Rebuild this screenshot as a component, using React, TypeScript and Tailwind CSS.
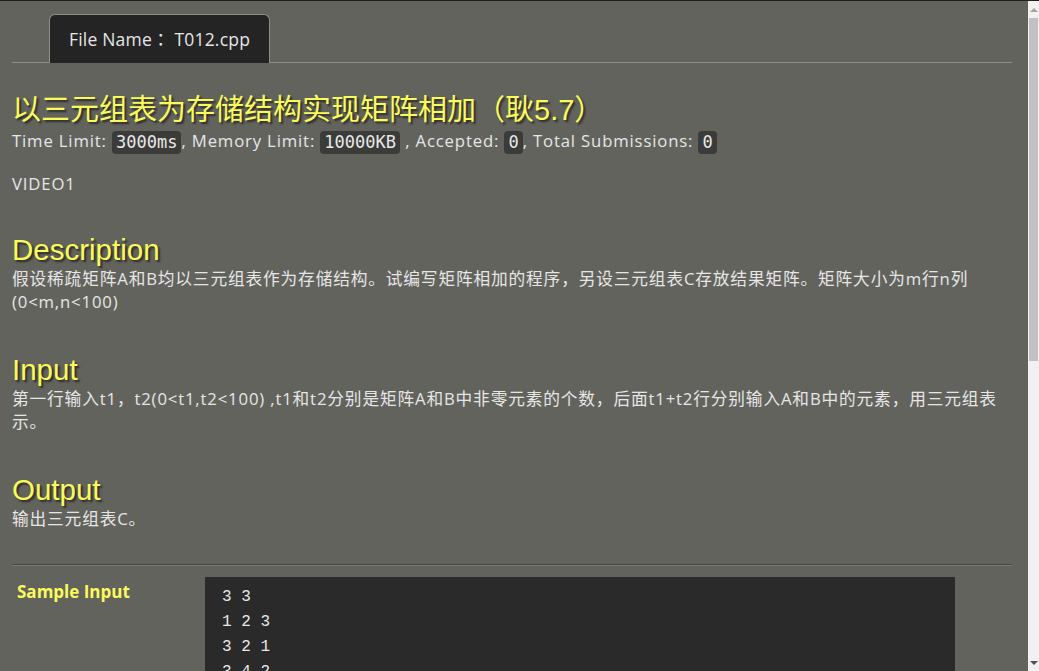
import React from "react";

const body = "font-['Open_Sans','Noto_Sans_CJK_SC',sans-serif]";

function Badge({ children }: { children: React.ReactNode }) {
  return (
    <code className="inline-block rounded-[4px] bg-[#3b3b39] px-[4px] leading-[23px] tracking-normal text-[17px] text-[#e8e8e8] font-['DejaVu_Sans_Mono',monospace] align-middle">
      {children}
    </code>
  );
}

function Heading({ children }: { children: React.ReactNode }) {
  return (
    <h2 className="text-[29.5px] leading-[34px] tracking-normal text-[#fafa5a] [text-shadow:2px_2px_2px_#2a2a28] font-['Liberation_Sans','Noto_Sans_CJK_SC',sans-serif]">
      {children}
    </h2>
  );
}

export default function App() {
  return (
    <div className="flex h-[671px] w-full overflow-hidden border-t border-[#1e1e1e] bg-[#63635e]">
      <div className={`flex-1 overflow-hidden pl-[12px] ${body} text-[16.7px] tracking-[0.85px] text-[#e6e6e6]`}>
        <div className="mr-[16px] flex border-b border-[#8c8c86] pl-[37px] pt-[13px]">
          <div className="-mb-px flex h-[49px] items-center rounded-t-[6px] border border-b-0 border-[#8f8f89] bg-[#242424] px-[19px] text-[17.5px] tracking-[0.2px] text-[#e6e6e6]">
            <span>File Name</span>
            <span className="font-['Noto_Sans_CJK_TC',sans-serif]">：</span>
            <span>&nbsp;T012.cpp</span>
          </div>
        </div>

        <div className="pr-[14px]">
          <h1 className="mt-[30px] text-[29px] leading-[34px] tracking-normal text-[#fafa5a] [text-shadow:2px_2px_2px_#2a2a28] font-['Liberation_Sans','Noto_Sans_CJK_SC',sans-serif]">
            以三元组表为存储结构实现矩阵相加（耿5.7）
          </h1>
          <div className="leading-[27px]">
            Time Limit: <Badge>3000ms</Badge>, Memory Limit: <Badge>10000KB</Badge> , Accepted: <Badge>0</Badge>, Total Submissions: <Badge>0</Badge>
          </div>
          <div className="mt-[18px] leading-[23px]">VIDEO1</div>

          <div className="mt-[38px]">
            <Heading>Description</Heading>
            <p className="leading-[23px]">
              假设稀疏矩阵A和B均以三元组表作为存储结构。试编写矩阵相加的程序，另设三元组表C存放结果矩阵。矩阵大小为m行n列(0&lt;m,n&lt;100)
            </p>
          </div>

          <div className="mt-[40px]">
            <Heading>Input</Heading>
            <p className="leading-[23px]">
              第一行输入t1，t2(0&lt;t1,t2&lt;100) ,t1和t2分别是矩阵A和B中非零元素的个数，后面t1+t2行分别输入A和B中的元素，用三元组表示。
            </p>
          </div>

          <div className="mt-[40px]">
            <Heading>Output</Heading>
            <p className="leading-[23px]">输出三元组表C。</p>
          </div>

          <div className="mr-[2px] mt-[34px] border-t border-[#474744]">
            <div className="border-t border-[#7c7c77]" />
          </div>

          <div className="mt-[11px] flex">
            <div className="w-[193px] pl-[5px] pt-[2px] text-[17px] font-bold tracking-normal text-[#fafa5a] font-['Open_Sans',sans-serif]">
              Sample Input
            </div>
            <pre className="h-[120px] w-[750px] bg-[#2a2a2a] px-[17px] pt-[8px] text-[16px] leading-[25px] tracking-normal text-[#e8e8e8] font-['Liberation_Mono',monospace]">
{`3 3
1 2 3
3 2 1
3 4 2`}
            </pre>
          </div>
        </div>
      </div>

      <div className="flex w-[11px] shrink-0 flex-col bg-[#f1f1f1]">
        <div className="flex h-[17px] items-center justify-center">
          <div className="h-0 w-0 border-x-[4px] border-b-[4px] border-x-transparent border-b-[#a3a3a3]" />
        </div>
        <div className="mx-[1px] h-[343px] bg-[#c1c1c1]" />
        <div className="flex-1" />
        <div className="flex h-[17px] items-center justify-center">
          <div className="h-0 w-0 border-x-[4px] border-t-[4px] border-x-transparent border-t-[#505050]" />
        </div>
      </div>
    </div>
  );
}
